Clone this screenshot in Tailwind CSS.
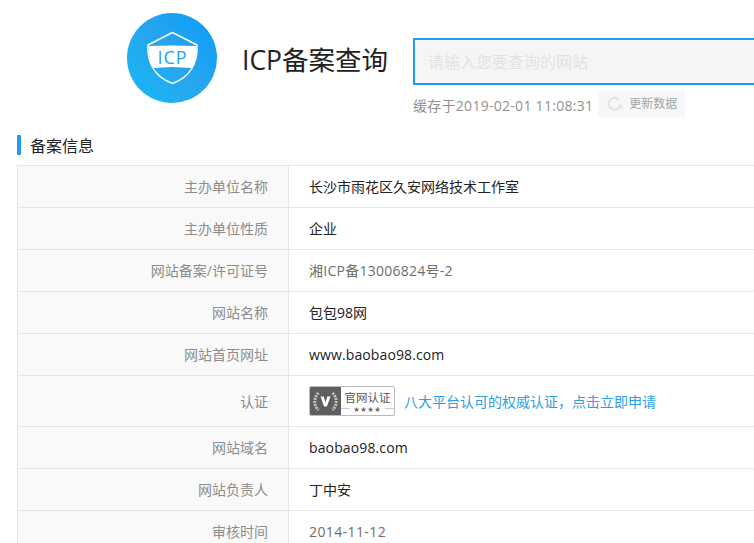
<!DOCTYPE html>
<html lang="zh">
<head>
<meta charset="utf-8">
<script src="https://cdn.jsdelivr.net/npm/@tailwindcss/browser@4"></script>
</head>
<body class="bg-white overflow-hidden h-[543px] w-[754px] font-['Open_Sans','Noto_Sans_CJK_SC',sans-serif]">
<div class="w-[1000px]">
  <header class="flex h-[135px] pl-[127px] pt-[13px]">
    <svg class="w-[90px] h-[90px] shrink-0" viewBox="0 0 90 90">
      <defs>
        <linearGradient id="g" x1="0" y1="1" x2="1" y2="0">
          <stop offset="0" stop-color="#15b8f5"/>
          <stop offset="0.5" stop-color="#27a6ef"/>
          <stop offset="1" stop-color="#0a9cf8"/>
        </linearGradient>
      </defs>
      <circle cx="45" cy="45" r="45" fill="url(#g)"/>
      <path d="M45.5 19.5 L70 32 C71 50 63 64 45.5 70.5 C28 64 20 50 21 32 Z" fill="none" stroke="#fff" stroke-width="1.5" stroke-linejoin="round"/>
      <path d="M21.5 33 L45.5 32.5 L69.5 33 C69.5 42 68 49 65.5 55 L45.5 54 L25.5 55 C23 49 21.5 42 21.5 33 Z" fill="#fff"/>
      <text x="45.5" y="51" text-anchor="middle" font-size="18" fill="#25a5ef" font-family="Open Sans" letter-spacing="1">ICP</text>
    </svg>
    <h1 class="ml-[25px] mt-[27px] w-[145px] text-[26.5px] leading-[40px] h-[40px] text-[#222] font-normal whitespace-nowrap">ICP备案查询</h1>
    <div class="ml-[26px] mt-[25px] flex-1">
      <div class="h-[47px] border-2 border-[#2199ec] bg-[#f5f5f5] pl-[13px] text-[16px] leading-[45px] text-[#e3e3e3]">请输入您要查询的网站</div>
      <div class="flex items-center mt-[6px] h-[26px]">
        <span class="pt-[2px] text-[14px] tracking-[0.28px] text-[#919191] whitespace-nowrap">缓存于2019-02-01 11:08:31</span>
        <span class="ml-[5px] w-[87px] h-[26px] rounded-[2px] bg-[#f7f7f7] flex items-center pl-[9px] gap-[6px] text-[12px] text-[#a5a5a5]">
          <svg class="w-[16px] h-[16px]" viewBox="0 0 16 16" fill="none">
            <path d="M13.6 8.5A6 6 0 1 1 12 3.6" stroke="#e2e2e2" stroke-width="2"/>
            <path d="M11.5 9.5h5l-2.5 3z" fill="#e2e2e2"/>
          </svg>
          <span class="whitespace-nowrap">更新数据</span>
        </span>
      </div>
    </div>
  </header>
  <div class="pl-[17px]">
    <h2 class="flex items-center h-[20px] gap-[9px] text-[16px] text-[#222] font-normal">
      <span class="w-[4px] h-[20px] rounded-[1px] bg-[#2199ec]"></span><span class="pt-[2px]">备案信息</span>
    </h2>
    <div class="mt-[10px] border-t border-l border-[#e6e6e6] text-[14px]">
      <div class="flex h-[42px] border-b border-[#e6e6e6]">
        <div class="w-[271px] shrink-0 bg-[#f9f9f9] border-r border-[#e6e6e6] flex items-center justify-end pr-[20px] text-[#8c8c8c]">主办单位名称</div>
        <div class="pl-[20px] flex items-center text-[#222]">长沙市雨花区久安网络技术工作室</div>
      </div>
      <div class="flex h-[42px] border-b border-[#e6e6e6]">
        <div class="w-[271px] shrink-0 bg-[#f9f9f9] border-r border-[#e6e6e6] flex items-center justify-end pr-[20px] text-[#8c8c8c]">主办单位性质</div>
        <div class="pl-[20px] flex items-center text-[#222]">企业</div>
      </div>
      <div class="flex h-[42px] border-b border-[#e6e6e6]">
        <div class="w-[271px] shrink-0 bg-[#f9f9f9] border-r border-[#e6e6e6] flex items-center justify-end pr-[20px] text-[#8c8c8c]">网站备案/许可证号</div>
        <div class="pl-[20px] flex items-center tracking-[0.25px] text-[#6e6e6e]">湘ICP备13006824号-2</div>
      </div>
      <div class="flex h-[42px] border-b border-[#e6e6e6]">
        <div class="w-[271px] shrink-0 bg-[#f9f9f9] border-r border-[#e6e6e6] flex items-center justify-end pr-[20px] text-[#8c8c8c]">网站名称</div>
        <div class="pl-[20px] flex items-center text-[#222]">包包98网</div>
      </div>
      <div class="flex h-[42px] border-b border-[#e6e6e6]">
        <div class="w-[271px] shrink-0 bg-[#f9f9f9] border-r border-[#e6e6e6] flex items-center justify-end pr-[20px] text-[#8c8c8c]">网站首页网址</div>
        <div class="pl-[20px] flex items-center tracking-[0.12px] text-[#222]">www.baobao98.com</div>
      </div>
      <div class="flex h-[51px] border-b border-[#e6e6e6]">
        <div class="w-[271px] shrink-0 bg-[#f9f9f9] border-r border-[#e6e6e6] flex items-center justify-end pr-[20px] pt-px text-[#8c8c8c]">认证</div>
        <div class="pl-[20px] flex items-center">
          <span class="flex w-[86px] h-[30px] rounded-[2px] border border-[#bbb] overflow-hidden bg-white">
            <span class="w-[31px] bg-[#5f5f5f] flex items-center justify-center">
              <svg class="w-[27px] h-[27px]" viewBox="0 0 27 27" fill="none">
                <path d="M6.5 5a11.5 11.5 0 0 0 0 17M20.5 5a11.5 11.5 0 0 1 0 17" stroke="#c4c4c4" stroke-width="3" stroke-dasharray="2 1"/>
                <path d="M8.5 8.5h3.2l1.8 6 1.8-6h3.2l-3.6 10h-2.8z" fill="#fff"/>
              </svg>
            </span>
            <span class="flex-1 flex flex-col items-center justify-center text-[#555]">
              <span class="text-[11.5px] leading-[15px] whitespace-nowrap">官网认证</span>
              <span class="flex items-center gap-[3px] text-[6px] leading-[8px] tracking-[1px] text-[#666] whitespace-nowrap"><span class="w-[9px] h-px bg-[#ccc]"></span>★★★★<span class="w-[9px] h-px bg-[#ccc]"></span></span>
            </span>
          </span>
          <span class="ml-[9px] pt-px text-[#2ba0ea] whitespace-nowrap">八大平台认可的权威认证，点击立即申请</span>
        </div>
      </div>
      <div class="flex h-[42px] border-b border-[#e6e6e6]">
        <div class="w-[271px] shrink-0 bg-[#f9f9f9] border-r border-[#e6e6e6] flex items-center justify-end pr-[20px] text-[#8c8c8c]">网站域名</div>
        <div class="pl-[20px] flex items-center tracking-[0.12px] text-[#222]">baobao98.com</div>
      </div>
      <div class="flex h-[42px] border-b border-[#e6e6e6]">
        <div class="w-[271px] shrink-0 bg-[#f9f9f9] border-r border-[#e6e6e6] flex items-center justify-end pr-[20px] text-[#8c8c8c]">网站负责人</div>
        <div class="pl-[20px] flex items-center text-[#222]">丁中安</div>
      </div>
      <div class="flex h-[42px] border-b border-[#e6e6e6]">
        <div class="w-[271px] shrink-0 bg-[#f9f9f9] border-r border-[#e6e6e6] flex items-center justify-end pr-[20px] text-[#8c8c8c]">审核时间</div>
        <div class="pl-[20px] flex items-center tracking-[0.4px] text-[#6e6e6e]">2014-11-12</div>
      </div>
    </div>
  </div>
</div>
</body>
</html>
